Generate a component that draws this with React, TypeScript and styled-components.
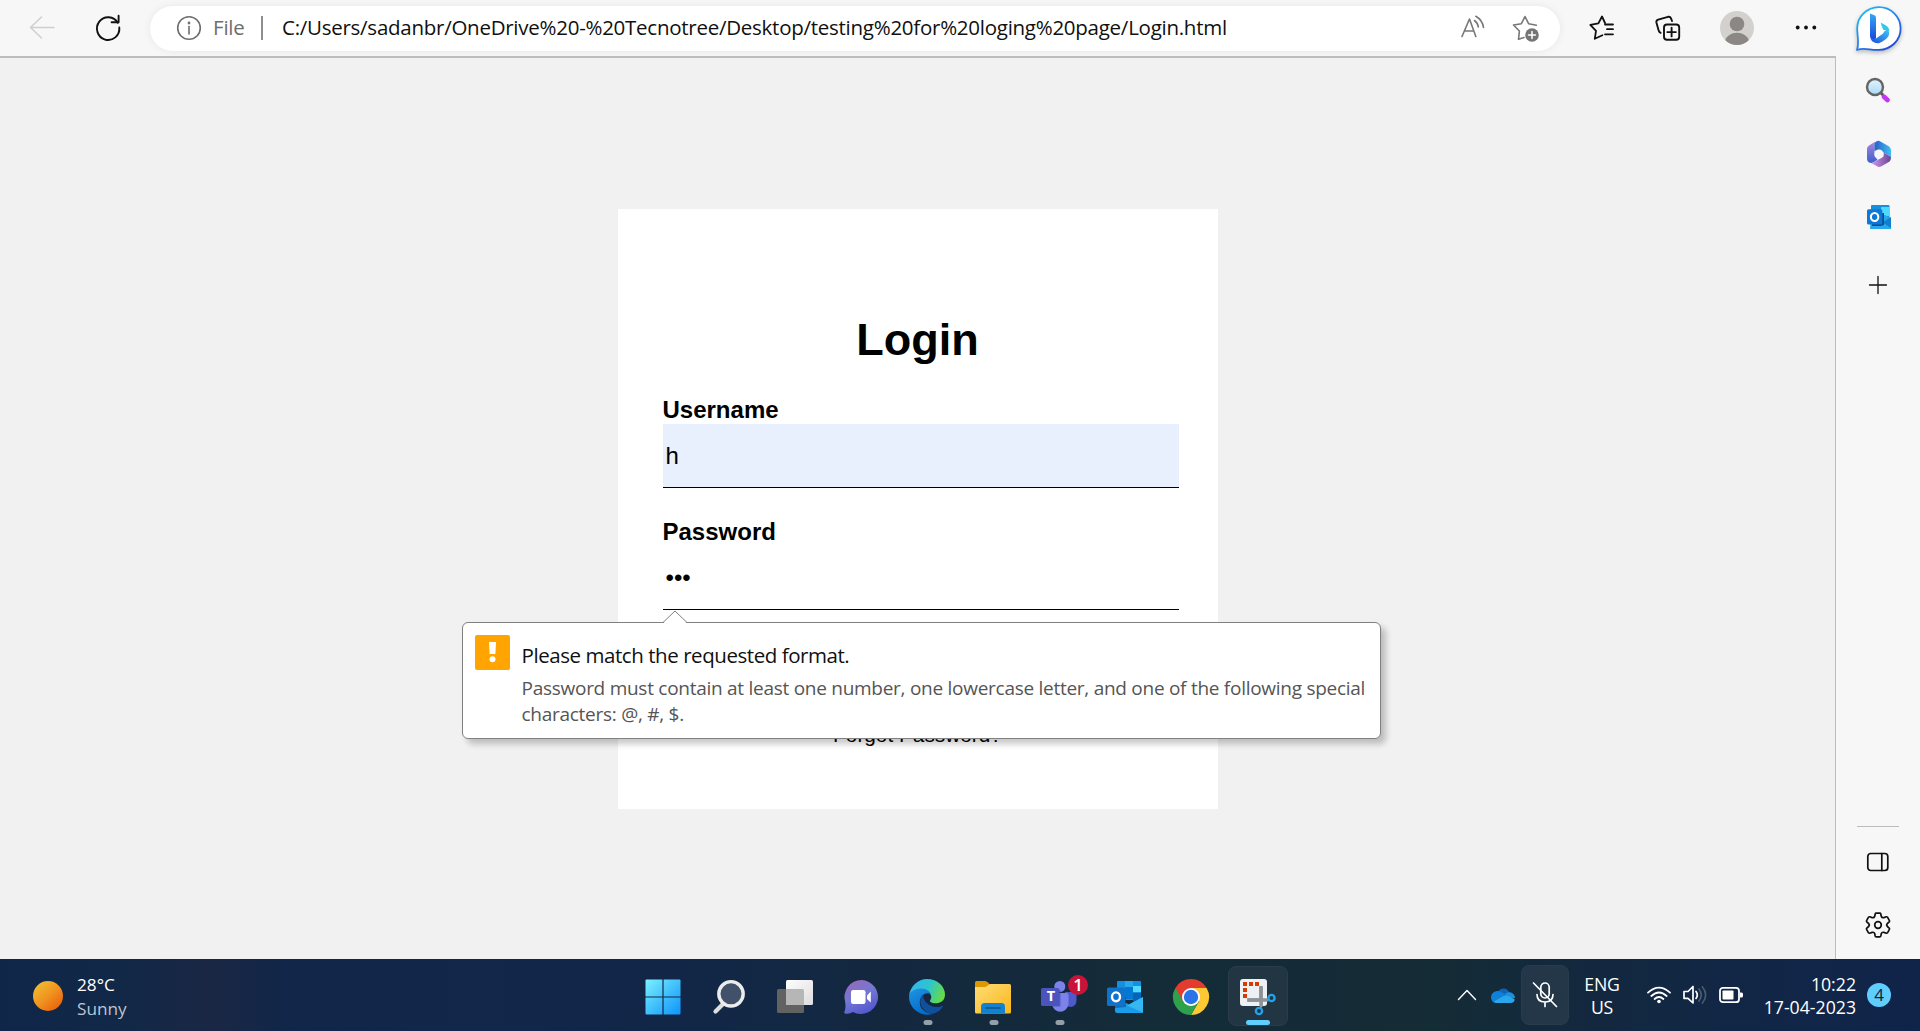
import React from "react";
import styled, { createGlobalStyle } from "styled-components";

const UI_FONT = `"Open Sans", "Noto Sans", sans-serif`;
const PAGE_FONT = `"Liberation Sans", Arial, sans-serif`;

const GlobalStyle = createGlobalStyle`
  * { box-sizing: border-box; }
  body { margin: 0; background: #f1f1f1; font-family: ${UI_FONT}; overflow: hidden; }
  svg { display: block; flex: none; overflow: visible; }
`;

const Desktop = styled.div`
  display: flex;
  flex-direction: column;
  width: 1920px;
  height: 1031px;
`;

const Browser = styled.div`
  display: flex;
  height: 959px;
`;

const BrowserMain = styled.div`
  display: flex;
  flex-direction: column;
  width: 1836px;
`;

const Toolbar = styled.header`
  display: flex;
  align-items: center;
  height: 56px;
  padding-left: 9px;
  background: #f7f7f7;
`;

const ToolButton = styled.div<{ $w?: number }>`
  display: flex;
  flex: none;
  align-items: center;
  justify-content: center;
  width: ${(p) => p.$w ?? 66}px;
  height: 56px;
`;

const AddressBar = styled.div`
  display: flex;
  flex: none;
  align-items: center;
  width: 1410px;
  height: 45px;
  margin: 0 9px;
  padding: 0 20px 0 26px;
  border-radius: 23px;
  background: #fff;
  box-shadow: 0 0 8px rgba(0, 0, 0, 0.07);
  font-size: 20.5px;
  line-height: 43px;
  white-space: nowrap;
`;

const Scheme = styled.span`
  width: 48px;
  height: 45px;
  margin-left: 11px;
  color: #6e6e6e;
  letter-spacing: -0.2px;
`;

const Separator = styled.span`
  width: 2px;
  height: 24px;
  margin-right: 19px;
  background: #8e8e8e;
`;

const Url = styled.span`
  flex: 1;
  height: 45px;
  color: #101010;
  letter-spacing: -0.26px;
`;

const AddressIcons = styled.div`
  display: flex;
  gap: 26px;
`;

const Page = styled.main`
  display: flex;
  flex: 1;
  align-items: center;
  justify-content: center;
  border-top: 2px solid #bcbcbc;
  border-right: 1px solid #bcbcbc;
  background: #f1f1f1;
  font-family: ${PAGE_FONT};
  color: #000;
`;

const Card = styled.form`
  display: flex;
  flex-direction: column;
  width: 600px;
  height: 600px;
  padding: 105px 39px 0 45px;
  background: #fff;
`;

const Title = styled.h1`
  margin: 0 6px 30px 0;
  font-size: 45px;
  line-height: 52px;
  text-align: center;
`;

const Field = styled.div`
  position: relative;
  margin-bottom: 30px;
`;

const Label = styled.label`
  display: block;
  font-size: 24px;
  font-weight: bold;
  line-height: 28px;
`;

const Value = styled.div<{ $filled?: boolean }>`
  height: 64px;
  padding-left: 3px;
  border-bottom: 1px solid #000;
  background: ${(p) => (p.$filled ? "#e8f0fe" : "#fff")};
  font-size: 24px;
  line-height: 63px;
`;

const Forgot = styled.a`
  margin: 83px 6px 0 0;
  font-size: 20.8px;
  line-height: 24px;
  text-align: center;
`;

const Bubble = styled.div`
  position: absolute;
  z-index: 2;
  top: 104px;
  left: -201px;
  display: flex;
  gap: 12px;
  width: 919px;
  height: 117px;
  padding: 12px;
  border: 1px solid #808080;
  border-radius: 6px;
  background: #fff;
  box-shadow: 5px 5px 6px rgba(0, 0, 0, 0.22);
  font-family: ${UI_FONT};
`;

const BubbleArrow = styled.svg`
  position: absolute;
  top: -13px;
  left: 199px;
`;

const BubbleText = styled.div`
  padding-top: 6px;
  white-space: nowrap;
`;

const BubbleTitle = styled.div`
  color: #101010;
  font-size: 20.5px;
  line-height: 28px;
  letter-spacing: -0.44px;
`;

const BubbleBody = styled.div`
  margin-top: 6px;
  color: #555;
  font-size: 19px;
  line-height: 26px;
  letter-spacing: -0.27px;
`;

const Sidebar = styled.aside`
  display: flex;
  flex-direction: column;
  align-items: center;
  width: 84px;
  background: #f7f7f7;
`;

const SideSlot = styled.div<{ $h: number; $shift?: number }>`
  display: flex;
  flex: none;
  align-items: center;
  justify-content: center;
  width: 84px;
  height: ${(p) => p.$h}px;
  padding-left: ${(p) => p.$shift ?? 0}px;
`;

const SideRule = styled.div`
  width: 42px;
  height: 1px;
  margin-top: auto;
  background: #bcbcbc;
`;

const SideFooter = styled.div`
  height: 132px;
`;

const Taskbar = styled.footer`
  display: grid;
  grid-template-columns: 630px 660px 1fr;
  height: 72px;
  background: linear-gradient(
    90deg,
    #102649 0, #122847 120px, #1a2744 215px, #112649 285px, #122748 660px,
    #13283f 880px, #142b39 1120px, #142c36 1440px, #13283f 1600px, #112647 1780px, #10244a 100%
  );
  color: #fff;
`;

const Weather = styled.div`
  display: flex;
  align-items: center;
  gap: 14px;
  padding: 2px 0 0 33px;
  font-size: 17.2px;
  line-height: 24px;
`;

const WeatherText = styled.div`
  padding-top: 2px;
`;

const Muted = styled.div`
  color: #bcc4d1;
`;

const Apps = styled.div`
  display: flex;
`;

const AppSlot = styled.div`
  position: relative;
  display: flex;
  align-items: center;
  justify-content: center;
  width: 66px;
  height: 72px;
  padding-top: 3px;
`;

const ActiveTile = styled.div`
  display: flex;
  align-items: center;
  justify-content: center;
  width: 60px;
  height: 60px;
  margin: 0 0 1px 2px;
  border: 1px solid #2b3d4b;
  border-radius: 8px;
  background: #223543;
`;

const Running = styled.span<{ $active?: boolean }>`
  position: absolute;
  bottom: 6px;
  left: 34px;
  width: ${(p) => (p.$active ? 24 : 9)}px;
  height: 5px;
  border-radius: 3px;
  background: ${(p) => (p.$active ? "#60cdff" : "#959fa7")};
  transform: translateX(-50%);
`;

const Tray = styled.div`
  display: flex;
  align-items: center;
  padding-left: 159px;
  font-size: 17.7px;
  line-height: 23px;
`;

const TraySlot = styled.div<{ $w: number }>`
  display: flex;
  flex: none;
  align-items: center;
  justify-content: center;
  width: ${(p) => p.$w}px;
`;

const MicTile = styled.div`
  display: flex;
  align-items: center;
  justify-content: center;
  width: 48px;
  height: 60px;
  border: 1px solid #293c4d;
  border-radius: 8px;
  background: #243748;
`;

const Language = styled.div`
  width: 66px;
  padding-top: 2px;
  text-align: center;
  letter-spacing: -0.2px;
`;

const Clock = styled.div`
  width: 101px;
  padding-top: 1px;
  text-align: right;
  white-space: nowrap;
`;

const Notice = styled.div`
  display: flex;
  align-items: center;
  justify-content: center;
  width: 24px;
  height: 24px;
  margin-left: 11px;
  border-radius: 50%;
  background: #60cdff;
  color: #10202c;
  font-size: 17px;
  line-height: 24px;
`;

const line = (stroke = "#111", strokeWidth = 1.6) => ({
  fill: "none",
  stroke,
  strokeWidth,
  strokeLinecap: "round" as const,
  strokeLinejoin: "round" as const,
});

const BackIcon = () => (
  <svg width="26" height="26" viewBox="0 0 26 26" {...line("#cfcfcf", 1.5)}>
    <path d="M25 12.5H1.5M12.5 2 1.5 12.5 12.5 23" />
  </svg>
);

const ReloadIcon = () => (
  <svg width="26" height="28" viewBox="0 0 26 28" {...line("#111", 1.9)}>
    <path d="M22.8 8.8A11.2 11.4 0 1 0 24.3 13.5" />
    <path d="M23.6 1.8V8.3H16.6" />
  </svg>
);

const InfoIcon = () => (
  <svg width="26" height="26" viewBox="0 0 26 26" {...line("#6e6e6e", 1.6)}>
    <circle cx="13" cy="13" r="11.3" />
    <path d="M13 11.5V19" />
    <circle cx="13" cy="8" r=".6" fill="#6e6e6e" />
  </svg>
);

const ReadAloudIcon = () => (
  <svg width="26" height="28" viewBox="0 0 26 28" {...line("#777", 1.6)}>
    <path d="M2 22.5 9.5 5 15.8 22.5M4.7 17H13.8" />
    <path d="M14.5 6.5Q17.8 9 18.3 13M15.8 2.3Q22.5 6 23.5 13.5" />
  </svg>
);

const AddFavouriteIcon = () => (
  <svg width="28" height="28" viewBox="0 0 28 28" {...line("#777", 1.6)}>
    <path d="M12 23.5 6.5 25.3 7.4 17 1.5 11 9.4 9.7 13 2.5 16.6 9.7 24.4 11.2" />
    <circle cx="20" cy="21" r="6.8" fill="#747474" stroke="none" />
    <path d="M20 17.5V24.5M16.5 21H23.5" stroke="#fff" strokeWidth="1.5" />
  </svg>
);

const FavouritesIcon = () => (
  <svg width="26" height="28" viewBox="0 0 26 28" {...line("#111", 1.8)}>
    <path d="M13.4 21.2 5.8 24.8 7 16.8 1.3 10.8 9.4 9.4 13 2.5 16 9M18 15.2H24M16 20.3H24M16 10.5H24" />
  </svg>
);

const CollectionsIcon = () => (
  <svg width="26" height="26" viewBox="0 0 26 26" {...line("#111", 1.9)}>
    <rect x="9" y="9.5" width="15.2" height="15.2" rx="3" />
    <path d="M16.6 12.8V21.4M12.3 17.1H20.9M5.6 17.8Q4 17 3.6 15.2L1.4 7.5Q1 5.3 3.2 4.6L13 1.8Q15.2 1.3 16 3.3L17 6" />
  </svg>
);

const AvatarIcon = () => (
  <svg width="34" height="34" viewBox="0 0 34 34">
    <clipPath id="avatar"><circle cx="17" cy="17" r="17" /></clipPath>
    <g clipPath="url(#avatar)">
      <rect width="34" height="34" fill="#d3d1ce" />
      <circle cx="17" cy="13" r="7.3" fill="#8b8784" />
      <ellipse cx="17" cy="32" rx="12.2" ry="10.3" fill="#8b8784" />
    </g>
  </svg>
);

const MoreIcon = () => (
  <svg width="22" height="6" viewBox="0 0 22 6" fill="#111">
    <circle cx="2.7" cy="2.5" r="1.9" />
    <circle cx="11" cy="2.5" r="1.9" />
    <circle cx="19.3" cy="2.5" r="1.9" />
  </svg>
);

const BingBubble = styled.svg`
  filter: drop-shadow(0 2px 2px rgba(0, 0, 0, 0.25));
`;

const BingIcon = () => (
  <BingBubble width="52" height="52" viewBox="0 0 52 52">
    <defs>
      <linearGradient id="bg1" x1="0" y1="0" x2=".8" y2="1">
        <stop stopColor="#15c8ee" /><stop offset=".5" stopColor="#2c86f2" /><stop offset="1" stopColor="#1c48d6" />
      </linearGradient>
      <linearGradient id="bg2" x1="0" y1="0" x2="0" y2="1">
        <stop stopColor="#35a8f5" /><stop offset="1" stopColor="#1b49d8" />
      </linearGradient>
      <linearGradient id="bg3" x1="0" y1="1" x2="1" y2="0">
        <stop stopColor="#1a4ddb" /><stop offset="1" stopColor="#3fc4f7" />
      </linearGradient>
    </defs>
    <path d="M5 47C7.5 40 5.2 33 5.2 25.5A21.7 21.3 0 1 1 27 46.8C19 47.6 12 44 5 47Z" fill="#fff" stroke="url(#bg1)" strokeWidth="1.8" strokeLinejoin="round" />
    <path d="M28.6 19.6 34 22.6Q37.6 25 37.4 29Q36.5 26.8 31.5 27Q29.7 24 28.6 19.6Z" fill="#31c9e8" />
    <path d="M18 31.5 24 35.5 30.8 30.8Q32.5 27.5 35.5 26.6 38 29 36.6 33 34 37 27.5 39.9 24 41 20.5 38.5 18 36.5 18 31.5Z" fill="url(#bg3)" />
    <path d="M18 10.4 22.5 12.3Q24 13 24 15V35Q21.5 37.4 19 34.8 18 33.4 18 31.5Z" fill="url(#bg2)" />
  </BingBubble>
);

const SideSearchIcon = () => (
  <svg width="26" height="26" viewBox="0 0 26 26">
    <defs><linearGradient id="lens" x2="0" y2="1"><stop stopColor="#e2f4fe" /><stop offset="1" stopColor="#a9d9f5" /></linearGradient></defs>
    <path d="M19 19.8 22.5 23" stroke="#c436f2" strokeWidth="4.8" strokeLinecap="round" />
    <path d="M15.5 15.5 18 18" stroke="#555" strokeWidth="3" />
    <circle cx="10" cy="10" r="8" fill="url(#lens)" stroke="#656565" strokeWidth="2.4" />
  </svg>
);

const M365Icon = () => (
  <svg width="26" height="28" viewBox="0 0 26 28">
    <defs>
      <linearGradient id="m1" x2="0" y2="1"><stop stopColor="#a987dc" /><stop offset="1" stopColor="#3a5fce" /></linearGradient>
      <linearGradient id="m2"><stop stopColor="#2560c8" /><stop offset="1" stopColor="#43bdf2" /></linearGradient>
      <linearGradient id="m3"><stop stopColor="#d59af0" /><stop offset="1" stopColor="#6a4596" /></linearGradient>
    </defs>
    <path d="M9 1.8 3 5.4Q1 6.7 1 9V19Q1 21.4 3 22.5 5.5 23.6 8 22L11.5 19.8 8.5 16V4.5Z" fill="url(#m1)" />
    <path d="M8.5 11V4Q8.8 1.8 11 1L13 .8 22.8 6.2Q25 7.6 25 10V17.3L17.5 12.5 13 9.8Z" fill="url(#m2)" />
    <path d="M7.8 22.2 17.5 16.5 17.5 12.5 24.9 17Q25.2 20.6 22.8 22L15 26.4Q13 27.4 11 26.3L4.5 22.8Q6 23.2 7.8 22.2Z" fill="url(#m3)" />
    <circle cx="13" cy="14" r="4.5" fill="#f7f7f7" />
  </svg>
);

const OutlookIcon = () => (
  <svg width="36" height="36" viewBox="0 0 36 36">
    <path d="M10 3Q10 2 11 2H33Q34 2 34 3V21H10Z" fill="#1490df" />
    <path d="M18 2H26V8H18Z" fill="#28a8ea" />
    <path d="M26 7H34V13.5H26Z" fill="#50d9ff" />
    <path d="M18 8H26V20H18Z" fill="#0078d4" />
    <path d="M26 13.5H34V20L26 23Z" fill="#0364b8" />
    <path d="M8 18 22 25.5 36 18V33Q36 34 35 34H10Q8 34 8 32Z" fill="#1a9ce8" />
    <path d="M20 26.5 36 18V33.5Z" fill="#35b8f1" />
    <path d="M8 18H19V28L8 29Z" fill="#0a4f94" opacity=".6" />
    <rect x="0" y="8.5" width="18" height="18.5" rx="1.5" fill="#0f73cc" />
    <ellipse cx="9" cy="17.8" rx="4" ry="4.4" fill="none" stroke="#fff" strokeWidth="2.4" />
  </svg>
);

const SideOutlookIcon = () => (
  <svg width="24" height="24" viewBox="0 0 24 24">
    <rect x="4" y="0" width="18.5" height="16" rx="1" fill="#1490df" />
    <path d="M14 2H22.3V11H14Z" fill="#50d9ff" />
    <path d="M4 10H18L24 13V24H3Z" fill="#28a8ea" />
    <path d="M15.5 17.5 24 12V23Z" fill="#1080cd" />
    <path d="M5 8H17V20L14 21H5Z" fill="#0a4f94" />
    <rect x="0" y="4.3" width="15.3" height="15.3" rx="1.5" fill="#0f78d4" />
    <ellipse cx="7.6" cy="12" rx="3.7" ry="4" fill="none" stroke="#fff" strokeWidth="2.1" />
  </svg>
);

const PlusIcon = () => (
  <svg width="18" height="18" viewBox="0 0 18 18" {...line("#111", 1.3)}>
    <path d="M9 .5V17.5M.5 9H17.5" />
  </svg>
);

const PanelIcon = () => (
  <svg width="24" height="20" viewBox="0 0 24 20" {...line("#111", 1.7)}>
    <rect x="1.8" y="1.5" width="20" height="17" rx="3" />
    <path d="M15.8 1.5V18.5" />
  </svg>
);

const GearIcon = () => (
  <svg width="26" height="26" viewBox="0 0 26 26" {...line("#111", 1.7)}>
    <path d="M11.2 1.2H14.8Q15.6 1.2 15.8 2L16.3 4.4Q17 6.2 18.9 5.6L21.3 4.8Q22 4.6 22.5 5.2L24.4 8.6Q24.8 9.3 24.2 9.9L22.4 11.5Q21 13 22.4 14.5L24.2 16.1Q24.8 16.7 24.4 17.4L22.5 20.8Q22 21.4 21.3 21.2L18.9 20.4Q17 19.8 16.3 21.6L15.8 24Q15.6 24.8 14.8 24.8H11.2Q10.4 24.8 10.2 24L9.7 21.6Q9 19.8 7.1 20.4L4.7 21.2Q4 21.4 3.5 20.8L1.6 17.4Q1.2 16.7 1.8 16.1L3.6 14.5Q5 13 3.6 11.5L1.8 9.9Q1.2 9.3 1.6 8.6L3.5 5.2Q4 4.6 4.7 4.8L7.1 5.6Q9 6.2 9.7 4.4L10.2 2Q10.4 1.2 11.2 1.2Z" />
    <circle cx="13" cy="13" r="3.3" />
  </svg>
);

const WarningIcon = () => (
  <svg width="35" height="35" viewBox="0 0 35 35">
    <rect width="35" height="35" rx="2" fill="#ffa400" />
    <path d="M14 7H21L20.4 19H14.6Z" fill="#fff" />
    <circle cx="17.5" cy="24.3" r="3" fill="#fff" />
  </svg>
);

const SunIcon = () => (
  <svg width="30" height="30" viewBox="0 0 30 30">
    <defs><linearGradient id="sun" x1=".1" y1=".1" x2=".8" y2=".9"><stop stopColor="#f0bc30" /><stop offset=".55" stopColor="#ef9220" /><stop offset="1" stopColor="#ec670c" /></linearGradient></defs>
    <circle cx="15" cy="15" r="15" fill="url(#sun)" />
  </svg>
);

const StartIcon = () => (
  <svg width="36" height="36" viewBox="0 0 36 36">
    <defs><linearGradient id="win" gradientUnits="userSpaceOnUse" x1="0" y1="0" x2="36" y2="36"><stop stopColor="#7df3ff" /><stop offset=".55" stopColor="#3cbcfb" /><stop offset="1" stopColor="#0c94fb" /></linearGradient></defs>
    <g fill="url(#win)">
      <path d="M1.5.5H17.4V17.4H.5V1.5Q.5.5 1.5.5Z" />
      <path d="M18.6.5H34.5Q35.5.5 35.5 1.5V17.4H18.6Z" />
      <path d="M.5 18.6H17.4V35.5H1.5Q.5 35.5.5 34.5Z" />
      <path d="M18.6 18.6H35.5V34.5Q35.5 35.5 34.5 35.5H18.6Z" />
    </g>
  </svg>
);

const SearchIcon = () => (
  <svg width="36" height="36" viewBox="0 0 36 36">
    <path d="M12 25 4.5 32.5" stroke="#dedede" strokeWidth="4.2" strokeLinecap="round" />
    <circle cx="20" cy="14.8" r="12.2" fill="#41516a" stroke="#ececec" strokeWidth="3.4" />
  </svg>
);

const TaskViewIcon = () => (
  <svg width="36" height="36" viewBox="0 0 36 36">
    <defs><linearGradient id="tv" x2="1" y2="1"><stop stopColor="#fff" /><stop offset="1" stopColor="#dcdcdc" /></linearGradient></defs>
    <rect x="0" y="10" width="27" height="24" rx="1.5" fill="#626262" />
    <rect x="9" y="1" width="27" height="25" rx="1.5" fill="url(#tv)" />
    <path d="M9 10H25.5Q27 10 27 11.5V26H9Z" fill="#b6b6b6" />
  </svg>
);

const ChatIcon = () => (
  <svg width="36" height="36" viewBox="0 0 36 36">
    <defs><linearGradient id="chat" x1=".1" y1="0" x2=".6" y2="1"><stop stopColor="#9b68b4" /><stop offset=".5" stopColor="#7377d4" /><stop offset="1" stopColor="#5557cf" /></linearGradient></defs>
    <path d="M18.5 1A17 17 0 1 1 10 33Q6 35.5 2 34.5 .8 34 1.5 32.8 3 30 2.2 23A17 17 0 0 1 18.5 1Z" fill="url(#chat)" />
    <rect x="8" y="11" width="14.5" height="14" rx="2.2" fill="#fff" />
    <path d="M24 16.5 27.8 12.6V23.6L24 20Z" fill="#fff" />
  </svg>
);

const EdgeIcon = () => (
  <svg width="36" height="36" viewBox="0 0 36 36">
    <defs>
      <linearGradient id="e1" x1="0" y1=".3" x2="1" y2=".6"><stop stopColor="#32b4ee" /><stop offset=".5" stopColor="#2dc5cf" /><stop offset="1" stopColor="#68dc3d" /></linearGradient>
      <linearGradient id="e2" x1="0" y1="0" x2=".5" y2="1"><stop stopColor="#1d95e0" /><stop offset="1" stopColor="#0669c9" /></linearGradient>
    </defs>
    <path d="M0 16.5C1.5 7 9 0 18 0 28.5 0 36 7.5 36 15.5 36 21.5 31.5 24.3 26.5 24.3 22.5 24.3 20.8 22.8 21 21.6 21.2 20.8 22.3 20 22.3 18 22.3 15.5 19 10.5 12 10.5 6 10.5 2 13.5 0 16.5Z" fill="url(#e1)" />
    <path d="M0 18C0 13.5 5.5 9.5 12 9.5 18 9.5 21.3 13 22.1 15.5 19.5 13.3 14.5 14.3 12 18.5 9 24 11.5 31 18.5 33.8 20.5 34.8 23.5 35 25.2 34.5 13.5 39 0 30.5 0 18Z" fill="url(#e2)" />
    <path d="M14.2 15.3C9 20 11 29 18 33.5 24.5 36.5 31 32.5 33.8 27.5 34.2 26.7 33.5 26.5 32.8 26.9 27.8 29.7 20 27.5 16 22 14.3 19.5 13.8 17 14.2 15.3Z" fill="#104f9d" />
  </svg>
);

const FolderIcon = () => (
  <svg width="36" height="36" viewBox="0 0 36 36">
    <defs><linearGradient id="fold" x2="1" y2="1"><stop stopColor="#ffdc76" /><stop offset="1" stopColor="#f9b71b" /></linearGradient></defs>
    <path d="M0 3.5Q0 2 1.5 2H10Q11.5 2 13 3.5L15 5.5V12H0Z" fill="#dd9800" />
    <path d="M0 8H9.5Q11 8 12.5 6.8L14 5.5Q14.6 5 15.5 5H34.5Q36 5 36 6.5V33Q36 34.5 34.5 34.5H1.5Q0 34.5 0 33Z" fill="url(#fold)" />
    <path d="M6 34.5V27.5Q6 24 9.5 24H26.5Q30 24 30 27.5V34.5Z" fill="#1481cf" />
    <path d="M11 29H25" stroke="#075590" strokeWidth="1.6" strokeLinecap="round" />
  </svg>
);

const TeamsGlyph = styled.span`
  position: absolute;
  top: 28px;
  left: 16px;
  width: 18px;
  color: #fff;
  font-size: 14.5px;
  font-weight: bold;
  line-height: 18px;
  text-align: center;
`;

const TeamsBadge = styled.span`
  position: absolute;
  top: 16px;
  right: 4px;
  width: 20px;
  height: 20px;
  border-radius: 50%;
  background: #c9143a;
  color: #fff;
  font-size: 17px;
  font-weight: 600;
  line-height: 20px;
  text-align: center;
`;

const TeamsIcon = () => (
  <svg width="36" height="36" viewBox="0 0 36 36">
    <path d="M24 13H35.5V21Q35.5 27 30 28L24 27Z" fill="#5059c9" />
    <circle cx="18.8" cy="7.5" r="5.5" fill="#7b83eb" />
    <path d="M12 14H25.5Q27.5 14 27.5 16V25A8.3 8.7 0 0 1 11 25Z" fill="#7b83eb" />
    <path d="M11 11H19.5V27.5H11.5Z" fill="#3d44a8" opacity=".6" />
    <rect x="0" y="9" width="18.3" height="18" rx="1.6" fill="#4b53bc" />
  </svg>
);

const ChromeIcon = () => (
  <svg width="36" height="36" viewBox="0 0 36 36">
    <path d="M18 9H33.6A18 18 0 0 1 18 36L25.8 22.5Z" fill="#fcc934" />
    <path d="M2.4 9A18 18 0 0 0 18 36L25.8 22.5 18 18Z" fill="#2da14c" />
    <path d="M18 9H33.6A18 18 0 0 0 2.4 9L10.2 22.5Z" fill="#e33b2e" />
    <circle cx="18" cy="18" r="9" fill="#fff" />
    <circle cx="18" cy="18" r="7.2" fill="#2a73e8" />
  </svg>
);

const SnipIcon = () => (
  <svg width="36" height="38" viewBox="0 0 36 38">
    <rect x="0" y="2" width="27" height="27" rx="3" fill="#eef1f4" />
    <g fill="#d83b01">
      <path d="M3 5H7V9H3ZM9 5H13V9H9ZM15 5H19V9H15ZM3 11H7V15H3ZM3 17H7V21H3Z" />
    </g>
    <path d="M19 9H23V29L20 32V25H7V21H19Z" fill="#a3a8ad" />
    <path d="M21 10.5V28M9 23H27" stroke="#8d9297" strokeWidth="3.4" strokeLinecap="round" />
    <circle cx="31.5" cy="21" r="3.1" fill="none" stroke="#21a2ea" strokeWidth="2.4" />
    <circle cx="19" cy="34" r="3.1" fill="none" stroke="#21a2ea" strokeWidth="2.4" />
  </svg>
);

const ChevronIcon = () => (
  <svg width="18" height="12" viewBox="0 0 18 12" {...line("#fff", 1.4)}>
    <path d="M.5 10.5 9 1.5 17.5 10.5" />
  </svg>
);

const CloudIcon = () => (
  <svg width="24" height="18" viewBox="0 0 24 18">
    <path d="M7 6A6 6 0 0 1 18 6L21 8 12 11Z" fill="#0f63bd" />
    <path d="M6 5Q9 4.5 11 6.5L17 10 5 17Q0 16.5 0 11 .5 6 6 5Z" fill="#1180d8" />
    <path d="M14 8Q16.5 5.5 20 6.5 24 8 24 12L18 13Z" fill="#1a90e0" />
    <path d="M3 15.5 12.5 10Q15 8.8 17.5 10L23.8 13.5Q23 17 19.5 17H6Q4 17 3 15.5Z" fill="#2aa6ea" />
  </svg>
);

const MicOffIcon = () => (
  <svg width="26" height="28" viewBox="0 0 26 28" {...line("#fff", 1.7)}>
    <rect x="8.8" y="2" width="8.4" height="15" rx="4.2" />
    <path d="M5 13.5Q5 21 13 21T21 13.5M13 21V25.5" />
    <path d="M1.5 2 24.5 25.5" />
  </svg>
);

const WifiIcon = () => (
  <svg width="24" height="18" viewBox="0 0 24 18" {...line("#fff", 1.8)}>
    <path d="M1 6.7Q12-3.5 23 6.7M4.3 10Q12 2.9 19.7 10M7.6 13Q12 9 16.4 13" />
    <circle cx="12" cy="15.5" r="1.8" fill="#fff" stroke="none" />
  </svg>
);

const SpeakerIcon = () => (
  <svg width="24" height="20" viewBox="0 0 24 20" {...line("#fff", 1.7)}>
    <path d="M1 6.5H5L10 1.5V18L5 13.3H1Z" />
    <path d="M13 6.5Q15.6 10 13 13.4" />
    <path d="M16 4Q20.5 10 16 16M19.3 1.8Q26 10 19.3 18.2" stroke="#4a5a70" />
  </svg>
);

const BatteryIcon = () => (
  <svg width="24" height="18" viewBox="0 0 24 18">
    <rect x="1" y="1.8" width="19" height="14.4" rx="3" {...line("#fff", 1.8)} />
    <rect x="3.5" y="4.5" width="11" height="9" rx=".8" fill="#fff" />
    <path d="M21 6.5H22.5Q24 6.5 24 8V10Q24 11.5 22.5 11.5H21Z" fill="#fff" />
  </svg>
);

export default function App() {
  return (
    <Desktop>
      <GlobalStyle />
      <Browser>
        <BrowserMain>
          <Toolbar>
            <ToolButton><BackIcon /></ToolButton>
            <ToolButton><ReloadIcon /></ToolButton>
            <AddressBar>
              <InfoIcon />
              <Scheme>File</Scheme>
              <Separator />
              <Url>C:/Users/sadanbr/OneDrive%20-%20Tecnotree/Desktop/testing%20for%20loging%20page/Login.html</Url>
              <AddressIcons>
                <ReadAloudIcon />
                <AddFavouriteIcon />
              </AddressIcons>
            </AddressBar>
            <ToolButton><FavouritesIcon /></ToolButton>
            <ToolButton><CollectionsIcon /></ToolButton>
            <ToolButton $w={72}><AvatarIcon /></ToolButton>
            <ToolButton><MoreIcon /></ToolButton>
          </Toolbar>
          <Page>
            <Card>
              <Title>Login</Title>
              <Field>
                <Label>Username</Label>
                <Value $filled>h</Value>
              </Field>
              <Field>
                <Label>Password</Label>
                <Value>•••</Value>
                <Bubble>
                  <BubbleArrow width="26" height="14" viewBox="0 0 26 14">
                    <path d="M1 13.5 13 1 25 13.5V14H1Z" fill="#fff" />
                    <path d="M1 12.5 13 1 25 12.5" fill="none" stroke="#808080" />
                  </BubbleArrow>
                  <WarningIcon />
                  <BubbleText>
                    <BubbleTitle>Please match the requested format.</BubbleTitle>
                    <BubbleBody>
                      Password must contain at least one number, one lowercase letter, and one of the following special
                      <br />
                      characters: @, #, $.
                    </BubbleBody>
                  </BubbleText>
                </Bubble>
              </Field>
              <Forgot>Forgot Password?</Forgot>
            </Card>
          </Page>
        </BrowserMain>
        <Sidebar>
          <SideSlot $h={57}><BingIcon /></SideSlot>
          <SideSlot $h={66}><SideSearchIcon /></SideSlot>
          <SideSlot $h={62} $shift={2}><M365Icon /></SideSlot>
          <SideSlot $h={64} $shift={2}><SideOutlookIcon /></SideSlot>
          <SideSlot $h={72}><PlusIcon /></SideSlot>
          <SideRule />
          <SideFooter>
            <SideSlot $h={69}><PanelIcon /></SideSlot>
            <SideSlot $h={57}><GearIcon /></SideSlot>
          </SideFooter>
        </Sidebar>
      </Browser>
      <Taskbar>
        <Weather>
          <SunIcon />
          <WeatherText>
            <div>28°C</div>
            <Muted>Sunny</Muted>
          </WeatherText>
        </Weather>
        <Apps>
          <AppSlot><StartIcon /></AppSlot>
          <AppSlot><SearchIcon /></AppSlot>
          <AppSlot><TaskViewIcon /></AppSlot>
          <AppSlot><ChatIcon /></AppSlot>
          <AppSlot><EdgeIcon /><Running /></AppSlot>
          <AppSlot><FolderIcon /><Running /></AppSlot>
          <AppSlot>
            <TeamsIcon />
            <TeamsGlyph>T</TeamsGlyph>
            <TeamsBadge>1</TeamsBadge>
            <Running />
          </AppSlot>
          <AppSlot><OutlookIcon /></AppSlot>
          <AppSlot><ChromeIcon /></AppSlot>
          <AppSlot><ActiveTile><SnipIcon /></ActiveTile><Running $active /></AppSlot>
        </Apps>
        <Tray>
          <TraySlot $w={36}><ChevronIcon /></TraySlot>
          <TraySlot $w={36}><CloudIcon /></TraySlot>
          <MicTile><MicOffIcon /></MicTile>
          <Language>ENG<br />US</Language>
          <TraySlot $w={48}><WifiIcon /></TraySlot>
          <TraySlot $w={24}><SpeakerIcon /></TraySlot>
          <TraySlot $w={48}><BatteryIcon /></TraySlot>
          <Clock>10:22<br />17-04-2023</Clock>
          <Notice>4</Notice>
        </Tray>
      </Taskbar>
    </Desktop>
  );
}
